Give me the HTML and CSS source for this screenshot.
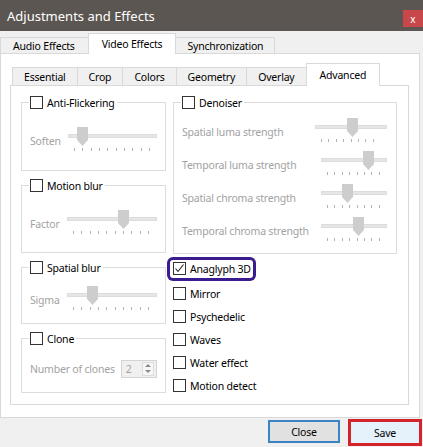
FILE: index.html
```html
<!DOCTYPE html>
<html lang="en">
<head>
  <meta charset="UTF-8">
  <title>Adjustments and Effects</title>
  <link rel="stylesheet" href="styles.css">
</head>
<body>
  <div class="window">
    <header class="titlebar">
      <span>Adjustments and Effects</span>
      <span class="close-x">x</span>
    </header>

    <nav class="tabs">
      <span class="tab">Audio Effects</span>
      <span class="tab active">Video Effects</span>
      <span class="tab">Synchronization</span>
    </nav>

    <section class="outer-pane">
      <nav class="tabs inner">
        <span class="tab">Essential</span>
        <span class="tab">Crop</span>
        <span class="tab">Colors</span>
        <span class="tab">Geometry</span>
        <span class="tab">Overlay</span>
        <span class="tab active">Advanced</span>
      </nav>

      <div class="inner-pane">
        <!-- left column: filters with one setting each -->
        <div class="col">
          <div class="group g-flicker">
            <label class="legend"><span class="box"></span>Anti-Flickering</label>
            <div class="row">
              <span class="lbl">Soften</span>
              <div class="slider">
                <div class="track"></div>
                <svg class="thumb" style="left:16%" viewBox="0 0 11 19"><path d="M0 0H11V13L5.5 19L0 13Z"/></svg>
                <div class="ticks"></div>
              </div>
            </div>
          </div>

          <div class="group g-motion">
            <label class="legend"><span class="box"></span>Motion blur</label>
            <div class="row">
              <span class="lbl">Factor</span>
              <div class="slider">
                <div class="track"></div>
                <svg class="thumb" style="left:62%" viewBox="0 0 11 19"><path d="M0 0H11V13L5.5 19L0 13Z"/></svg>
                <div class="ticks"></div>
              </div>
            </div>
          </div>

          <div class="group g-spatial">
            <label class="legend"><span class="box"></span>Spatial blur</label>
            <div class="row">
              <span class="lbl">Sigma</span>
              <div class="slider">
                <div class="track"></div>
                <svg class="thumb" style="left:28%" viewBox="0 0 11 19"><path d="M0 0H11V13L5.5 19L0 13Z"/></svg>
                <div class="ticks"></div>
              </div>
            </div>
          </div>

          <div class="group g-clone">
            <label class="legend"><span class="box"></span>Clone</label>
            <div class="row spin-row">
              <span class="lbl">Number of clones</span>
              <div class="spin">
                <span class="spin-val">2</span>
                <span class="spin-arrows"><i class="up"></i><i class="down"></i></span>
              </div>
            </div>
          </div>
        </div>

        <!-- right column: denoiser + toggles -->
        <div class="col">
          <div class="group g-denoise">
            <label class="legend"><span class="box"></span>Denoiser</label>
            <div class="rows">
              <div class="row">
                <span class="lbl">Spatial luma strength</span>
                <div class="slider small wide">
                  <div class="track"></div>
                  <svg class="thumb" style="left:51%" viewBox="0 0 11 19"><path d="M0 0H11V13L5.5 19L0 13Z"/></svg>
                  <div class="ticks"></div>
                </div>
              </div>
              <div class="row">
                <span class="lbl">Temporal luma strength</span>
                <div class="slider small">
                  <div class="track"></div>
                  <svg class="thumb" style="left:71%" viewBox="0 0 11 19"><path d="M0 0H11V13L5.5 19L0 13Z"/></svg>
                  <div class="ticks"></div>
                </div>
              </div>
              <div class="row">
                <span class="lbl">Spatial chroma strength</span>
                <div class="slider small">
                  <div class="track"></div>
                  <svg class="thumb" style="left:40%" viewBox="0 0 11 19"><path d="M0 0H11V13L5.5 19L0 13Z"/></svg>
                  <div class="ticks"></div>
                </div>
              </div>
              <div class="row">
                <span class="lbl">Temporal chroma strength</span>
                <div class="slider small">
                  <div class="track"></div>
                  <svg class="thumb" style="left:56%" viewBox="0 0 11 19"><path d="M0 0H11V13L5.5 19L0 13Z"/></svg>
                  <div class="ticks"></div>
                </div>
              </div>
            </div>
          </div>

          <ul class="checks">
            <li>
              <label class="check picked">
                <span class="box"><svg viewBox="0 0 11 11"><path d="M1.5 5.5L4 8.5L9.5 1.5"/></svg></span>Anaglyph 3D
              </label>
            </li>
            <li><label class="check"><span class="box"></span>Mirror</label></li>
            <li><label class="check"><span class="box"></span>Psychedelic</label></li>
            <li><label class="check"><span class="box"></span>Waves</label></li>
            <li><label class="check"><span class="box"></span>Water effect</label></li>
            <li><label class="check"><span class="box"></span>Motion detect</label></li>
          </ul>
        </div>
      </div>
    </section>

    <footer class="buttons">
      <button class="btn btn-close">Close</button>
      <button class="btn btn-save">Save</button>
    </footer>
  </div>
</body>
</html>
```

FILE: styles.css
```css
* { box-sizing: border-box; }
body {
  margin: 0; background: #f0f0f0; color: #000;
  font-family: "Noto Sans", "Segoe UI", sans-serif; font-size: 10.5px; letter-spacing: -0.2px;
}
.window { width: 423px; height: 447px; display: flex; flex-direction: column; overflow: hidden; }

/* title bar */
.titlebar {
  flex: none; height: 31px; padding-left: 7px;
  display: flex; align-items: center;
  background: #5b5651; color: #fff; font-size: 13px; letter-spacing: 0;
}
.close-x {
  margin-left: auto; align-self: flex-end; margin-bottom: 4px;
  width: 20px; height: 17px; background: #c8474a; color: #fff;
  display: flex; align-items: center; justify-content: center; font-size: 10px;
}

/* tabs */
.tabs { flex: none; display: flex; align-items: flex-end; height: 23px; margin-bottom: -1px; }
.tab {
  height: 16px; margin-bottom: 1px; margin-right: -1px; padding: 0 11px;
  display: flex; align-items: center;
  background: #f0f0f0; border: 1px solid #d9d9d9; border-bottom: none;
}
.tabs > .tab:first-child { padding: 0 13px 0 12px; }
.tab.active { height: 21px; margin-bottom: 0; padding: 0 13px; background: #fff; position: relative; z-index: 1; }
.tabs.inner { padding-left: 2px; }
.tabs.inner .tab { height: 18px; padding: 0 11px; }
.tabs.inner .tab.active { height: 23px; padding: 0 13px; }

.outer-pane {
  flex: none; height: 365px; margin-right: 3px; padding: 9px 10px 0 9px;
  background: #fff; border: 1px solid #d9d9d9;
}
.inner-pane {
  height: 320px; padding: 16px 0 0 10px;
  border: 1px solid #d9d9d9; background: #fff;
  display: grid; grid-template-columns: 145px 224px; column-gap: 7px; align-items: start;
}
.col { display: flex; flex-direction: column; gap: 14px; }

/* group boxes */
.group {
  position: relative; border: 1px solid #dcdcdc;
  display: flex; flex-direction: column; justify-content: center;
  padding: 6px 8px 0 8px;
}
.g-flicker { height: 69px; }
.g-motion { height: 68px; }
.g-spatial { height: 57px; }
.g-clone { height: 55px; }
.g-denoise { height: 152px; justify-content: flex-start; padding: 15px 9px 0 8px; }

.legend {
  position: absolute; top: -8px; left: 7px; height: 15px;
  display: flex; align-items: center; gap: 4px;
  padding: 0 2px 0 1px; background: #fff;
}

.box {
  flex: none; width: 13px; height: 13px;
  border: 1px solid #333; background: #fff;
  display: flex; align-items: center; justify-content: center;
}
.box svg { width: 11px; height: 11px; fill: none; stroke: #222; stroke-width: 1.1; }

.row { display: flex; align-items: center; gap: 7px; }
.lbl { color: #a2a2a2; white-space: nowrap; padding-top: 3px; }
.rows { display: flex; flex-direction: column; gap: 8px; }
.rows .row { justify-content: space-between; }
.spin-row { gap: 6px; }
.spin-row .lbl { padding-top: 0; }

/* sliders */
.slider { position: relative; height: 25px; flex: 1; }
.slider .track { height: 4px; margin-top: 7px; background: #e6e6e6; border: 1px solid #dcdcdc; }
.slider .thumb { position: absolute; top: 0; width: 11px; height: 19px; margin-left: -5px; fill: #cdcdcd; }
.slider .ticks {
  width: 76px; height: 3px; margin: 10px 0 0 6px;
  background: repeating-linear-gradient(90deg, #b3b3b3 0 1px, transparent 1px 8.33px);
}
.slider.small { flex: none; width: 66px; }
.slider.small.wide { width: 72px; }
.slider.small .ticks { width: 53px; background: repeating-linear-gradient(90deg, #b3b3b3 0 1px, transparent 1px 7.4px); }

/* spin box */
.spin {
  width: 37px; height: 18px; display: flex; align-items: center;
  border: 1px solid #d4d4d4; background: #f0f0f0; color: #a2a2a2;
}
.spin-val { flex: 1; padding-left: 4px; }
.spin-arrows {
  width: 12px; height: 14px; margin-right: 2px;
  display: flex; flex-direction: column; align-items: center; justify-content: center; gap: 3px;
  border: 1px solid #dcdcdc; background: #f6f6f6;
}
.spin-arrows i { width: 0; height: 0; border-left: 3px solid transparent; border-right: 3px solid transparent; }
.spin-arrows .up { border-bottom: 3px solid #8a8a8a; }
.spin-arrows .down { border-top: 3px solid #8a8a8a; }

/* checkbox list */
.checks { list-style: none; margin: -9px 0 0; padding: 0; }
.checks li { height: 23px; display: flex; align-items: center; }
.check { display: inline-flex; align-items: center; gap: 4px; }
.check.picked {
  height: 18px; margin: 0 0 4px -3px; padding: 0 2px 0 3px;
  border-radius: 3px; box-shadow: 0 0 0 3px #3b1c8e;
}

/* dialog buttons */
.buttons { flex: 1; display: flex; justify-content: flex-end; align-items: flex-start; gap: 8px; padding: 2px 1px 0 0; }
.btn { font: inherit; letter-spacing: inherit; color: #000; padding: 0; }
.btn-close { width: 72px; height: 23px; background: #e1e1e1; border: 2px solid #3a84c4; }
.btn-save { width: 74px; height: 27px; margin-top: -1px; background: #e5f1fb; border: 3px solid #d3232b; }
```
